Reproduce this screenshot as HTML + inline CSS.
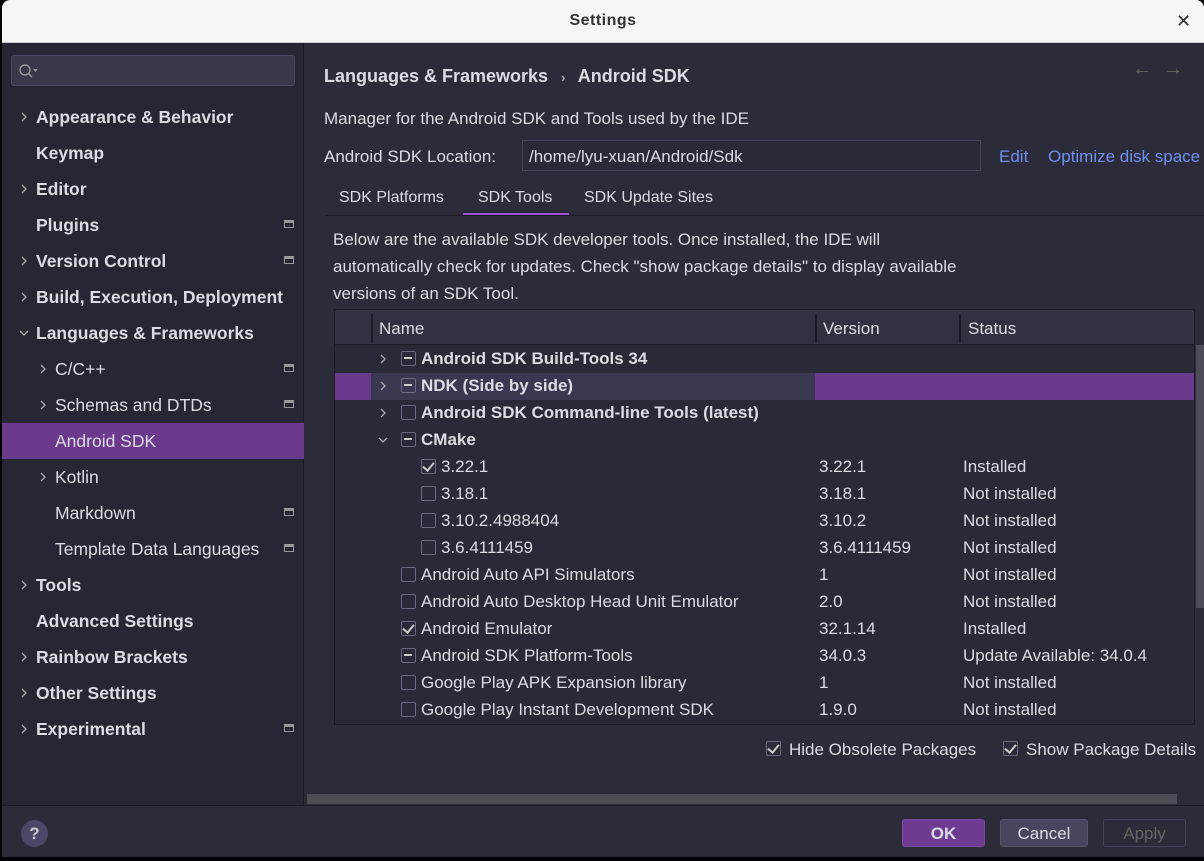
<!DOCTYPE html>
<html><head><meta charset="utf-8"><style>
*{margin:0;padding:0;box-sizing:border-box}
body{width:1204px;height:861px;background:#000;font-family:"Liberation Sans","DejaVu Sans",sans-serif;color:#dcdbe4;position:relative;overflow:hidden;font-size:17px}
.a{position:absolute;white-space:nowrap}
.win{position:absolute;left:2px;top:0;width:1202px;height:857px;background:#2c2b39;border-radius:8px 8px 0 0;overflow:hidden}
.title{position:absolute;left:0;top:0;width:100%;height:43px;background:#f6f6f6;border-bottom:1px solid #ccc}
.side{position:absolute;left:0;top:43px;width:302px;height:762px;background:#272634;border-right:1px solid #1c1b26}
.cb{position:absolute;width:15px;height:15px;border:1.5px solid #6c6a80;border-radius:2px}
.cb.m::after{content:"";position:absolute;left:2px;top:5px;width:8px;height:2px;background:#ccc}
.cb.c::after{content:"";position:absolute;left:3px;top:0px;width:5px;height:9px;border:solid #ccc;border-width:0 2px 2px 0;transform:rotate(40deg)}
</style></head><body>
<div class="win">
<div class="title"><div class="a" style="left:0;width:1202px;text-align:center;top:12px;font-weight:bold;font-size:16px;color:#333;letter-spacing:.5px">Settings</div>
<div class="a" style="left:1174px;top:11px;font-size:18px;color:#333">✕</div></div>
<div class="side">
<div class="a" style="left:9px;top:12px;width:284px;height:31px;background:#393749;border:1px solid #4a4860;border-radius:3px"></div>
<svg class="a" style="left:16px;top:20px" width="22" height="16"><circle cx="7" cy="7" r="5" fill="none" stroke="#999" stroke-width="1.4"/><line x1="10.5" y1="10.5" x2="14" y2="14" stroke="#999" stroke-width="1.4"/><path d="M15 6h5l-2.5 3z" fill="#999"/></svg>
<div class="a" style="left:0;top:380px;width:302px;height:36px;background:#6b3a8d"></div>
</div>
<div id="sb"></div>
<div class="a" style="left:322px;top:66px;font-weight:bold;font-size:18px">Languages &amp; Frameworks <span style="font-size:13px;color:#aaa;margin:0 8px">›</span> Android SDK</div>
<div class="a" style="left:1130px;top:58px;color:#666;font-size:20px">←&nbsp;&nbsp;→</div>
<div class="a" style="left:322px;top:109px">Manager for the Android SDK and Tools used by the IDE</div>
<div class="a" style="left:322px;top:147px">Android SDK Location:</div>
<div class="a" style="left:520px;top:140px;width:459px;height:31px;background:#2a2937;border:1px solid #46445a"></div>
<div class="a" style="left:527px;top:147px">/home/lyu-xuan/Android/Sdk</div>
<div class="a" style="left:997px;top:147px;color:#6f8ff0">Edit</div>
<div class="a" style="left:1046px;top:147px;color:#6f8ff0">Optimize disk space</div>
<div class="a" style="left:337px;top:189px;font-size:16px">SDK Platforms</div>
<div class="a" style="left:476px;top:189px;font-size:16px">SDK Tools</div>
<div class="a" style="left:582px;top:189px;font-size:16px">SDK Update Sites</div>
<div class="a" style="left:461px;top:213px;width:106px;height:3px;background:#9b4fd0"></div>
<div class="a" style="left:323px;top:215px;width:880px;height:1px;background:#1c1b26"></div>
<div class="a" style="left:331px;top:226px;line-height:27px">Below are the available SDK developer tools. Once installed, the IDE will<br>automatically check for updates. Check "show package details" to display available<br>versions of an SDK Tool.</div>
<div class="a" style="left:332px;top:309px;width:861px;height:416px;border:1px solid #1c1b26;background:#2a2937" id="tbl">
<div class="a" style="left:0;top:0;width:859px;height:35px;background:#323142;border-bottom:1px solid #1c1b26"></div>
<div class="a" style="left:36px;top:4px;width:2px;height:29px;background:#1c1b26"></div>
<div class="a" style="left:480px;top:4px;width:2px;height:29px;background:#1c1b26"></div>
<div class="a" style="left:624px;top:4px;width:2px;height:29px;background:#1c1b26"></div>
<div class="a" style="left:44px;top:9px">Name</div>
<div class="a" style="left:488px;top:9px">Version</div>
<div class="a" style="left:633px;top:9px">Status</div>
</div>
<div class="a" style="left:1194px;top:345px;width:8px;height:263px;background:#4d4c57"></div>
<div class="a" style="left:305px;top:794px;width:870px;height:10px;background:#4d4c57"></div>
<div class="a" style="left:0;top:805px;width:1202px;height:1px;background:#1c1b26"></div>
<div class="a" style="left:19px;top:820px;width:27px;height:27px;border-radius:50%;background:#4a4866;color:#ccc;text-align:center;font-weight:bold;font-size:17px;line-height:27px">?</div>
<div class="cb c" style="left:764px;top:741px"></div>
<div class="a" style="left:787px;top:740px">Hide Obsolete Packages</div>
<div class="cb c" style="left:1001px;top:741px"></div>
<div class="a" style="left:1024px;top:740px">Show Package Details</div>
<div class="a" style="left:900px;top:819px;width:83px;height:28px;background:#6e3b93;border:1px solid #7d4aa0;border-radius:3px;text-align:center;font-weight:bold;line-height:28px">OK</div>
<div class="a" style="left:998px;top:819px;width:88px;height:28px;background:#48455f;border:1px solid #55526c;border-radius:3px;text-align:center;line-height:28px">Cancel</div>
<div class="a" style="left:1101px;top:819px;width:83px;height:28px;border:1px solid #45435a;border-radius:3px;text-align:center;line-height:28px;color:#666">Apply</div>
</div>
<script>
var s=[["Appearance & Behavior",1,0,0],["Keymap",0,0,0],["Editor",1,0,0],["Plugins",0,0,1],["Version Control",1,0,1],["Build, Execution, Deployment",1,0,0],["Languages & Frameworks",2,0,0],["C/C++",1,1,1],["Schemas and DTDs",1,1,1],["Android SDK",0,2,0],["Kotlin",1,1,0],["Markdown",0,2,1],["Template Data Languages",0,2,1],["Tools",1,0,0],["Advanced Settings",0,0,0],["Rainbow Brackets",1,0,0],["Other Settings",1,0,0],["Experimental",1,0,1]];
var h="";s.forEach(function(r,i){var y=107+i*36;var x=r[2]?53:34;
if(r[1])h+='<svg class="a" style="left:'+(r[2]?35:16)+'px;top:'+(y+4)+'px" width="12" height="12"><path d="'+(r[1]==2?'M2 4l4 4 4-4':'M4 2l4 4-4 4')+'" fill="none" stroke="#aaa" stroke-width="1.3"/></svg>';
h+='<div class="a" style="left:'+x+'px;top:'+y+'px;font-size:17.5px;'+(r[2]?'':'font-weight:bold;')+'">'+r[0].replace("&","&amp;")+'</div>';
if(r[3])h+='<div class="a" style="left:282px;top:'+(y+5)+'px;width:10px;height:8px;border:1px solid #999;border-top-width:3px"></div>';});
document.getElementById("sb").innerHTML=h;
var rows=[["r","m","Android SDK Build-Tools 34","","",1,0],["r","m","NDK (Side by side)","","",1,0,1],["r","","Android SDK Command-line Tools (latest)","","",1,0],["d","m","CMake","","",1,0],["","c","3.22.1","3.22.1","Installed",0,1],["","","3.18.1","3.18.1","Not installed",0,1],["","","3.10.2.4988404","3.10.2","Not installed",0,1],["","","3.6.4111459","3.6.4111459","Not installed",0,1],["","","Android Auto API Simulators","1","Not installed",0,0],["","","Android Auto Desktop Head Unit Emulator","2.0","Not installed",0,0],["","c","Android Emulator","32.1.14","Installed",0,0],["","m","Android SDK Platform-Tools","34.0.3","Update Available: 34.0.4",0,0],["","","Google Play APK Expansion library","1","Not installed",0,0],["","","Google Play Instant Development SDK","1.9.0","Not installed",0,0]];
var t="";rows.forEach(function(r,i){var y=36+i*27;
if(r[7])t+='<div class="a" style="left:0;top:'+y+'px;width:36px;height:27px;background:#6b3a8d"></div><div class="a" style="left:36px;top:'+y+'px;width:444px;height:27px;background:#3a3850"></div><div class="a" style="left:480px;top:'+y+'px;width:379px;height:27px;background:#6b3a8d"></div>';
var cx=r[6]?86:66;
if(r[0])t+='<svg class="a" style="left:42px;top:'+(y+7)+'px" width="12" height="12"><path d="'+(r[0]=='d'?'M2 4l4 4 4-4':'M4 2l4 4-4 4')+'" fill="none" stroke="#aaa" stroke-width="1.3"/></svg>';
t+='<div class="cb '+r[1]+'" style="left:'+cx+'px;top:'+(y+5)+'px"></div>';
t+='<div class="a" style="left:'+(cx+20)+'px;top:'+(y+3)+'px;'+(r[5]?'font-weight:bold;':'')+'">'+r[2]+'</div>';
t+='<div class="a" style="left:484px;top:'+(y+3)+'px">'+r[3]+'</div><div class="a" style="left:628px;top:'+(y+3)+'px">'+r[4]+'</div>';});
document.getElementById("tbl").insertAdjacentHTML("beforeend",t);
</script>
</body></html>
